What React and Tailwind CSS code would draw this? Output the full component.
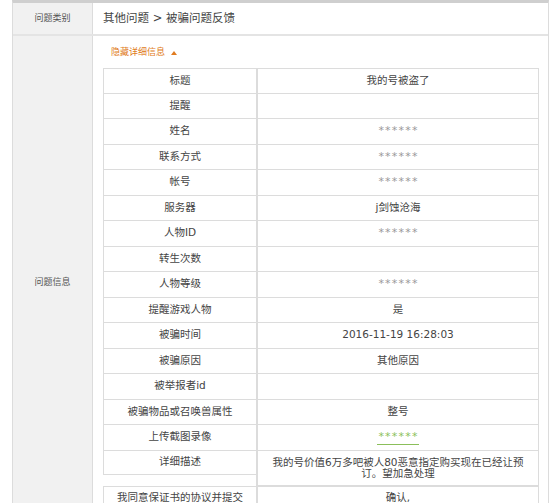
import React from "react";

const rows = [
  { label: "标题", value: "我的号被盗了" },
  { label: "提醒", value: "" },
  { label: "姓名", value: "******", mask: true },
  { label: "联系方式", value: "******", mask: true },
  { label: "帐号", value: "******", mask: true },
  { label: "服务器", value: "j剑蚀沧海" },
  { label: "人物ID", value: "******", mask: true },
  { label: "转生次数", value: "" },
  { label: "人物等级", value: "******", mask: true },
  { label: "提醒游戏人物", value: "是" },
  { label: "被骗时间", value: "2016-11-19 16:28:03" },
  { label: "被骗原因", value: "其他原因" },
  { label: "被举报者id", value: "" },
  { label: "被骗物品或召唤兽属性", value: "整号" },
  { label: "上传截图录像", value: "******", link: true },
];

function Row({ label, value, mask, link, first }) {
  return (
    <div className={`flex h-[25.5px] ${first ? "border-t border-[#dcdcdc]" : ""}`}>
      <div className="w-[153px] flex items-center justify-center border-l border-b border-[#dcdcdc] text-[#444]">
        {label}
      </div>
      <div className="flex-1 flex items-center justify-center border-l-2 border-r border-b border-[#dcdcdc] text-[#444]">
        {mask && <span className="text-[#999] text-[11px] tracking-[1.2px] pl-[1px]">{value}</span>}
        {link && (
          <span className="text-[#8bbf5a] text-[11px] tracking-[1.2px] pl-[1px] border-b border-[#8bbf5a] leading-[14px]">
            {value}
          </span>
        )}
        {!mask && !link && value}
      </div>
    </div>
  );
}

export default function App() {
  return (
    <div
      className="bg-white w-[557px] h-[503px] overflow-hidden text-[10.5px]"
      style={{ fontFamily: '"DejaVu Sans", "Noto Sans CJK SC", sans-serif' }}
    >
      <div className="ml-[12px] w-[537px] border-t-[3px] border-t-[#cfcfcf] border-x border-x-[#dcdcdc]">
        {/* 问题类别 */}
        <div className="flex h-[33px] border-b-2 border-[#e4e4e4]">
          <div className="w-[80px] bg-[#f1f1f1] border-r border-[#dcdcdc] flex items-center justify-center text-[#555] text-[9px]">
            问题类别
          </div>
          <div className="flex-1 flex items-center pl-[10px] text-[#444] text-[11.5px]">
            其他问题 &gt; 被骗问题反馈
          </div>
        </div>

        {/* 问题信息 */}
        <div className="flex">
          <div className="w-[80px] bg-[#f1f1f1] border-r border-[#dcdcdc] flex items-center justify-center text-[#555] text-[9px]">
            问题信息
          </div>
          <div className="flex-1 pl-[10px] pt-[8px] pb-[18px]">
            <div className="flex items-center gap-[6px] text-[#e07b20] text-[9px] h-[17px] pl-[8px]">
              隐藏详细信息
              <svg width="6" height="4" viewBox="0 0 6 4">
                <path d="M0 4 L3 0 L6 4 Z" fill="#e07b20" />
              </svg>
            </div>
            <div className="w-[436px] mt-[7px]">
              {rows.map((r, i) => (
                <Row key={r.label} {...r} first={i === 0} />
              ))}
              <div className="flex">
                <div className="w-[153px] h-[24px] flex items-center justify-center border-l border-b border-[#dcdcdc] text-[#444]">
                  详细描述
                </div>
                <div className="flex-1 h-[35px] flex items-center justify-center text-center px-[6px] leading-[11px] border-l-2 border-r border-b border-[#dcdcdc] text-[#444] text-[10.5px]">
                  我的号价值6万多吧被人80恶意指定购买现在已经让预订。望加急处理
                </div>
              </div>
              <div className="flex h-[25px] border-t border-[#dcdcdc]">
                <div className="w-[153px] flex items-center justify-center border-l border-b border-[#dcdcdc] text-[#444]">
                  我同意保证书的协议并提交
                </div>
                <div className="flex-1 flex items-center justify-center border-l-2 border-r border-b border-[#dcdcdc] text-[#444]">
                  确认,
                </div>
              </div>
            </div>
          </div>
        </div>
      </div>
    </div>
  );
}
